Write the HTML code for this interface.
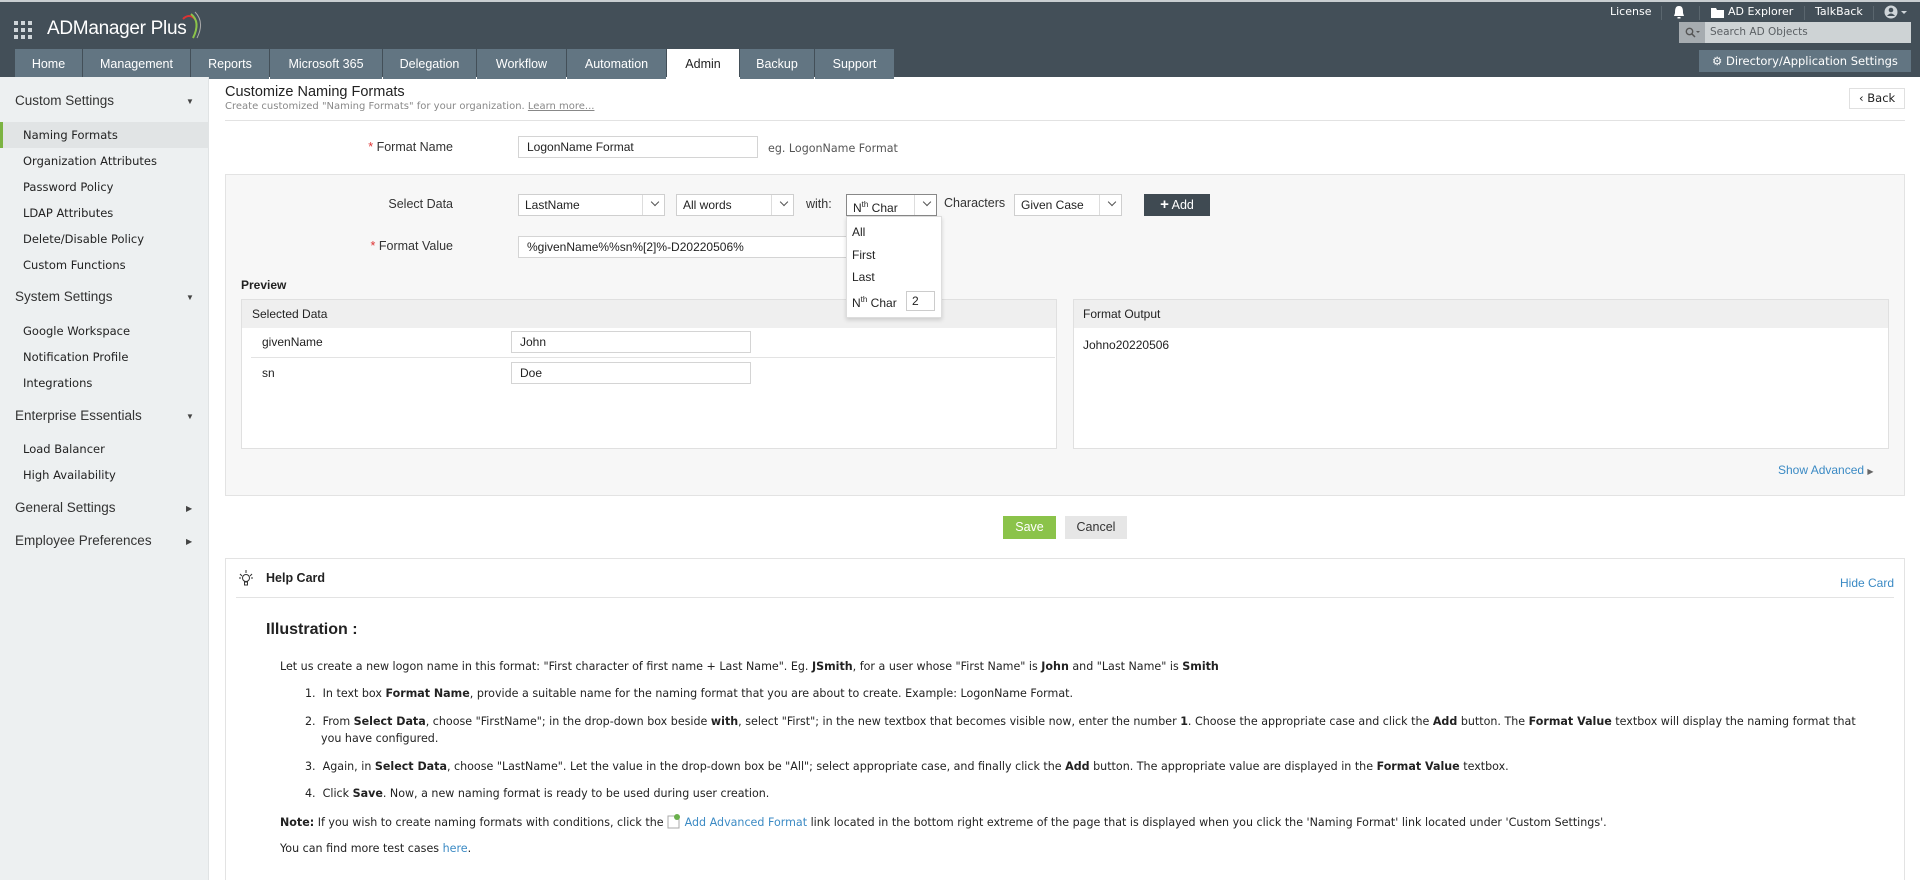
<!DOCTYPE html>
<html><head><meta charset="utf-8"><style>
*{box-sizing:border-box;margin:0;padding:0}
body{width:1920px;height:880px;overflow:hidden;background:#fff;font-family:"Liberation Sans",sans-serif;color:#222;position:relative}
.a{position:absolute;white-space:nowrap}
#hdr{position:absolute;left:0;top:0;width:1920px;height:77px;background:#434f58;border-top:2px solid #c9ced1}
.tab{position:absolute;top:47px;height:30px;background:#627582;color:#fff;font-size:12.5px;line-height:30px;text-align:center}
.tab.on{background:#fff;color:#222}
#side{position:absolute;left:0;top:77px;width:209px;height:803px;background:#edf0f1;border-right:1px solid #e0e3e4}
.sh{position:absolute;left:15px;font-size:13.5px;color:#333}
.si{position:absolute;left:23px;font-family:"DejaVu Sans",sans-serif;font-size:11.5px;color:#222}
.ar{position:absolute;left:186px;font-size:8px;color:#444}
.lbl{position:absolute;font-size:12.5px;color:#333;text-align:right;width:230px;left:223px}
.inp{position:absolute;background:#fff;border:1px solid #d4d4d4;font-size:12px;padding-left:8px;line-height:20px;color:#222}
.sel{position:absolute;background:#fff;border:1px solid #cfcfcf;font-size:12px;padding-left:6px;line-height:20px}
.sel:after{content:"";position:absolute;right:0;top:0;width:21px;height:100%;border-left:1px solid #ddd}
.sel i{position:absolute;right:6px;top:4px;width:6px;height:6px;border-right:1.5px solid #555;border-bottom:1.5px solid #555;transform:rotate(45deg)}
.txt{font-family:"DejaVu Sans",sans-serif;font-size:11.1px;color:#222}
b{font-weight:bold}
.lnk{color:#3b8ac4}
</style></head><body>
<div id="hdr">
 <svg class="a" style="left:14px;top:19px" width="19" height="19"><g fill="#cfd5d9"><rect x="0" y="0" width="4" height="4"/><rect x="7" y="0" width="4" height="4"/><rect x="14" y="0" width="4" height="4"/><rect x="0" y="7" width="4" height="4"/><rect x="7" y="7" width="4" height="4"/><rect x="14" y="7" width="4" height="4"/><rect x="0" y="14" width="4" height="4"/><rect x="7" y="14" width="4" height="4"/><rect x="14" y="14" width="4" height="4"/></g></svg>
 <div class="a" style="left:47px;top:16px;color:#fff;font-size:19px;letter-spacing:-0.3px">ADManager Plus</div>
 <svg class="a" style="left:180px;top:8px" width="24" height="30"><path d="M3 9 Q9 3 15 9" stroke="#d33" stroke-width="2" fill="none"/><path d="M11 4 Q21 12 13 28" stroke="#8bc34a" stroke-width="2" fill="none"/><path d="M15 2 Q25 12 17 28" stroke="#aaa" stroke-width="1" fill="none"/></svg>
 <div class="tab" style="left:15px;width:67px">Home</div>
 <div class="tab" style="left:83px;width:107px">Management</div>
 <div class="tab" style="left:191px;width:78px">Reports</div>
 <div class="tab" style="left:270px;width:112px">Microsoft 365</div>
 <div class="tab" style="left:383px;width:93px">Delegation</div>
 <div class="tab" style="left:477px;width:89px">Workflow</div>
 <div class="tab" style="left:567px;width:99px">Automation</div>
 <div class="tab on" style="left:667px;width:72px">Admin</div>
 <div class="tab" style="left:740px;width:74px">Backup</div>
 <div class="tab" style="left:815px;width:79px">Support</div>
 <div class="a" style="left:1610px;top:3px;color:#fff;font-family:'DejaVu Sans',sans-serif;font-size:11px">License</div>
 <div class="a" style="left:1661px;top:4px;width:1px;height:14px;background:#5a666e"></div>
 <svg class="a" style="left:1673px;top:3px" width="12" height="14"><path d="M6 1 C2 1 2 5 2 8 L1 11 L11 11 L10 8 C10 5 10 1 6 1Z M4.5 12 h3 v1.5 h-3z" fill="#fff"/></svg>
 <div class="a" style="left:1699px;top:4px;width:1px;height:14px;background:#5a666e"></div>
 <svg class="a" style="left:1711px;top:6px" width="13" height="10"><path d="M0 0h5l1 2h7v8H0z" fill="#fff"/></svg>
 <div class="a" style="left:1728px;top:3px;color:#fff;font-family:'DejaVu Sans',sans-serif;font-size:11px">AD Explorer</div>
 <div class="a" style="left:1804px;top:4px;width:1px;height:14px;background:#5a666e"></div>
 <div class="a" style="left:1815px;top:3px;color:#fff;font-family:'DejaVu Sans',sans-serif;font-size:11px">TalkBack</div>
 <div class="a" style="left:1873px;top:4px;width:1px;height:14px;background:#5a666e"></div>
 <svg class="a" style="left:1884px;top:3px" width="30" height="14"><circle cx="7" cy="7" r="6.5" fill="#cfd5d9"/><circle cx="7" cy="5" r="2.3" fill="#434f58"/><path d="M3 11 Q7 6 11 11" fill="#434f58"/><path d="M17 6 l3 3 l3 -3z" fill="#cfd5d9"/></svg>
 <div class="a" style="left:1679px;top:20px;width:26px;height:21px;background:#a6acb0"><svg style="position:absolute;left:6px;top:5px" width="16" height="11"><circle cx="4.5" cy="4.5" r="3.2" stroke="#555" stroke-width="1.4" fill="none"/><path d="M7 7l3 3" stroke="#555" stroke-width="1.5"/><path d="M11 4h4l-2 2z" fill="#555"/></svg></div>
 <div class="a" style="left:1705px;top:20px;width:206px;height:21px;background:#ced3d5;color:#5a5f63;font-family:'DejaVu Sans',sans-serif;font-size:10.5px;line-height:21px;padding-left:5px">Search AD Objects</div>
 <div class="a" style="left:1699px;top:48px;width:212px;height:22px;background:#627582;color:#fff;font-family:'DejaVu Sans',sans-serif;font-size:11.5px;line-height:22px;padding-left:13px">⚙ Directory/Application Settings</div>
</div>

<div id="side">
 <div class="a" style="left:0;top:45px;width:209px;height:26px;background:#e1e4e5"></div>
 <div class="a" style="left:0;top:45px;width:3px;height:26px;background:#7cb342"></div>
 <div class="sh" style="top:16px">Custom Settings</div><div class="ar" style="top:20px">▼</div>
 <div class="si" style="top:51px">Naming Formats</div>
 <div class="si" style="top:77px">Organization Attributes</div>
 <div class="si" style="top:103px">Password Policy</div>
 <div class="si" style="top:129px">LDAP Attributes</div>
 <div class="si" style="top:155px">Delete/Disable Policy</div>
 <div class="si" style="top:181px">Custom Functions</div>
 <div class="sh" style="top:212px">System Settings</div><div class="ar" style="top:216px">▼</div>
 <div class="si" style="top:247px">Google Workspace</div>
 <div class="si" style="top:273px">Notification Profile</div>
 <div class="si" style="top:299px">Integrations</div>
 <div class="sh" style="top:331px">Enterprise Essentials</div><div class="ar" style="top:335px">▼</div>
 <div class="si" style="top:365px">Load Balancer</div>
 <div class="si" style="top:391px">High Availability</div>
 <div class="sh" style="top:423px">General Settings</div><div class="ar" style="top:427px">▶</div>
 <div class="sh" style="top:456px">Employee Preferences</div><div class="ar" style="top:460px">▶</div>
</div>

<div class="a" style="left:225px;top:84px;font-size:14.5px;color:#222">Customize Naming Formats</div>
<div class="a" style="left:225px;top:101px;font-family:'DejaVu Sans',sans-serif;font-size:10px;color:#888">Create customized "Naming Formats" for your organization. <span style="text-decoration:underline">Learn more...</span></div>
<div class="a" style="left:225px;top:120px;width:1680px;height:1px;background:#e2e2e2"></div>
<div class="a" style="left:1849px;top:88px;width:56px;height:21px;border:1px solid #e0e0e0;font-family:'DejaVu Sans',sans-serif;font-size:11.5px;line-height:19px;padding-left:9px">‹ Back</div>

<div class="lbl" style="top:140px"><span style="color:#d33">*</span> Format Name</div>
<div class="inp" style="left:518px;top:136px;width:240px;height:22px">LogonName Format</div>
<div class="a txt" style="left:768px;top:142px;color:#555">eg. LogonName Format</div>

<div class="a" style="left:225px;top:174px;width:1680px;height:322px;background:#f7f7f7;border:1px solid #e3e3e3"></div>
<div class="lbl" style="top:197px">Select Data</div>
<div class="sel" style="left:518px;top:194px;width:147px;height:22px">LastName<i></i></div>
<div class="sel" style="left:676px;top:194px;width:118px;height:22px">All words<i></i></div>
<div class="a" style="left:806px;top:197px;font-size:12.5px;color:#333">with:</div>
<div class="sel" style="left:846px;top:194px;width:91px;height:22px;border-color:#888">N<sup style="font-size:8px">th</sup> Char<i></i></div>
<div class="a" style="left:944px;top:196px;font-size:12.5px;color:#333">Characters</div>
<div class="sel" style="left:1014px;top:194px;width:108px;height:22px">Given Case<i></i></div>
<div class="a" style="left:1144px;top:194px;width:66px;height:22px;background:#3f4a52;color:#fff;font-size:12.5px;line-height:22px;text-align:center"><b style="font-size:15px">+</b> Add</div>
<div class="lbl" style="top:239px"><span style="color:#d33">*</span> Format Value</div>
<div class="inp" style="left:518px;top:236px;width:330px;height:22px">%givenName%%sn%[2]%-D20220506%</div>

<div class="a" style="left:241px;top:278px;font-size:12px;font-weight:bold">Preview</div>
<div class="a" style="left:241px;top:299px;width:816px;height:150px;background:#fff;border:1px solid #e0e0e0"></div>
<div class="a" style="left:242px;top:300px;width:814px;height:28px;background:#efefef;font-size:12px;line-height:28px;padding-left:10px">Selected Data</div>
<div class="a" style="left:262px;top:335px;font-size:12px">givenName</div>
<div class="inp" style="left:511px;top:331px;width:240px;height:22px">John</div>
<div class="a" style="left:251px;top:357px;width:804px;height:1px;background:#e3e3e3"></div>
<div class="a" style="left:262px;top:366px;font-size:12px">sn</div>
<div class="inp" style="left:511px;top:362px;width:240px;height:22px">Doe</div>
<div class="a" style="left:1073px;top:299px;width:816px;height:150px;background:#fff;border:1px solid #e0e0e0"></div>
<div class="a" style="left:1074px;top:300px;width:814px;height:28px;background:#efefef;font-size:12px;line-height:28px;padding-left:9px">Format Output</div>
<div class="a" style="left:1083px;top:338px;font-size:12px">Johno20220506</div>
<div class="a" style="left:1778px;top:463px;font-size:12px" ><span class="lnk">Show Advanced</span> <span style="font-size:8px;color:#666">▶</span></div>

<div class="a" style="left:846px;top:216px;width:96px;height:102px;background:#fff;border:1px solid #ddd;box-shadow:0 2px 4px rgba(0,0,0,.15);font-size:12px">
 <div class="a" style="left:5px;top:8px">All</div>
 <div class="a" style="left:5px;top:31px">First</div>
 <div class="a" style="left:5px;top:53px">Last</div>
 <div class="a" style="left:5px;top:78px">N<sup style="font-size:8px">th</sup> Char</div>
 <div class="a" style="left:59px;top:74px;width:29px;height:20px;border:1px solid #ccc;padding-left:5px;line-height:18px">2</div>
</div>

<div class="a" style="left:1003px;top:516px;width:53px;height:23px;background:#8bc34a;color:#fff;font-size:12.5px;line-height:23px;text-align:center">Save</div>
<div class="a" style="left:1065px;top:516px;width:62px;height:23px;background:#e6e6e6;color:#333;font-size:12.5px;line-height:23px;text-align:center">Cancel</div>

<div class="a" style="left:225px;top:558px;width:1680px;height:322px;border:1px solid #e3e3e3;border-bottom:none"></div>
<svg class="a" style="left:239px;top:569px" width="14" height="18"><g stroke="#333" stroke-width="1" fill="none"><circle cx="7" cy="9" r="3.5"/><path d="M5.5 13h3v3h-3z M7 1v3 M1 5l2 2 M13 5l-2 2 M0 9h2 M12 9h2"/></g></svg>
<div class="a" style="left:266px;top:571px;font-size:12.5px;font-weight:bold">Help Card</div>
<div class="a lnk" style="left:1840px;top:576px;font-size:12px">Hide Card</div>
<div class="a" style="left:236px;top:597px;width:1658px;height:1px;background:#e3e3e3"></div>
<div class="a" style="left:266px;top:621px;font-size:16px;font-weight:bold">Illustration :</div>
<div class="a txt" style="left:280px;top:660px">Let us create a new logon name in this format: "First character of first name + Last Name". Eg. <b>JSmith</b>, for a user whose "First Name" is <b>John</b> and "Last Name" is <b>Smith</b></div>
<div class="a txt" style="left:305px;top:687px">1.&nbsp; In text box <b>Format Name</b>, provide a suitable name for the naming format that you are about to create. Example: LogonName Format.</div>
<div class="a txt" style="left:305px;top:715px">2.&nbsp; From <b>Select Data</b>, choose "FirstName"; in the drop-down box beside <b>with</b>, select "First"; in the new textbox that becomes visible now, enter the number <b>1</b>. Choose the appropriate case and click the <b>Add</b> button. The <b>Format Value</b> textbox will display the naming format that</div>
<div class="a txt" style="left:321px;top:732px">you have configured.</div>
<div class="a txt" style="left:305px;top:760px">3.&nbsp; Again, in <b>Select Data</b>, choose "LastName". Let the value in the drop-down box be "All"; select appropriate case, and finally click the <b>Add</b> button. The appropriate value are displayed in the <b>Format Value</b> textbox.</div>
<div class="a txt" style="left:305px;top:787px">4.&nbsp; Click <b>Save</b>. Now, a new naming format is ready to be used during user creation.</div>
<div class="a txt" style="left:280px;top:814px"><b>Note:</b> If you wish to create naming formats with conditions, click the <svg width="14" height="15" style="vertical-align:-3px"><path d="M1 2h8l3 3v9H1z" fill="#fff" stroke="#aaa"/><circle cx="10" cy="3" r="3" fill="#6ab04c"/></svg> <span class="lnk">Add Advanced Format</span> link located in the bottom right extreme of the page that is displayed when you click the 'Naming Format' link located under 'Custom Settings'.</div>
<div class="a txt" style="left:280px;top:842px">You can find more test cases <span class="lnk">here</span>.</div>
</body></html>
